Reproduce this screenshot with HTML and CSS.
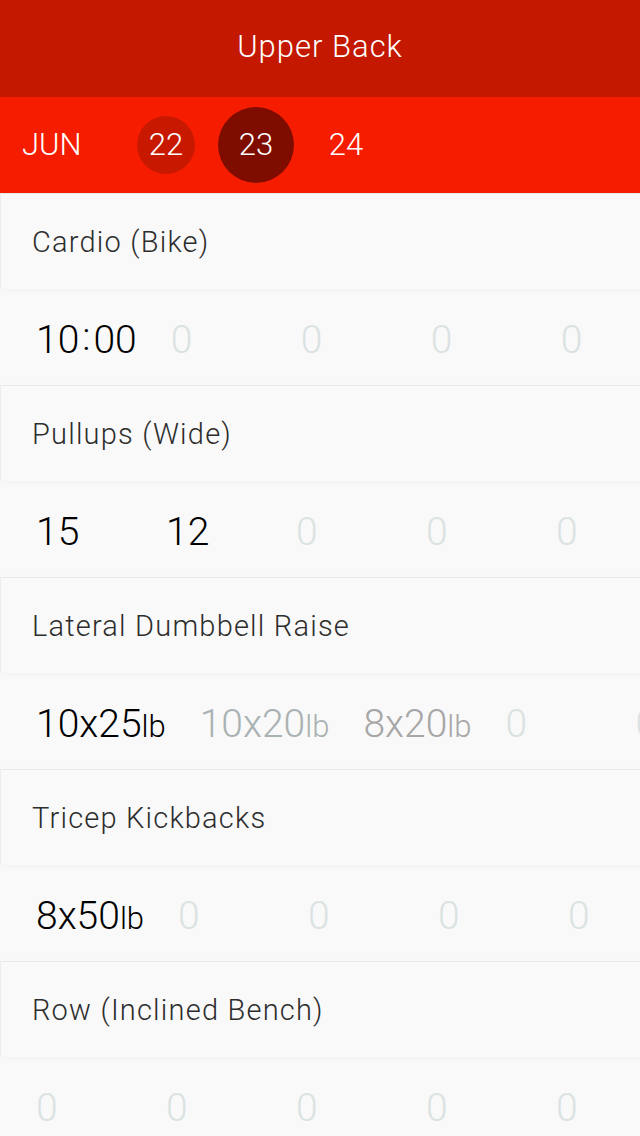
FILE: index.html
```html
<!DOCTYPE html>
<html>
<head>
<meta charset="utf-8">
<link rel="stylesheet" href="styles.css">
</head>
<body>
<div class="app">
  <header class="topbar"><h1 class="title">Upper Back</h1></header>
  <nav class="datebar">
    <span class="month">JUN</span>
    <span class="day day-past">22</span>
    <span class="day day-current">23</span>
    <span class="day">24</span>
  </nav>
  <main class="list">
    <div class="exercise">Cardio (Bike)</div>
    <div class="sets">
      <span class="set done">10<span class="colon">:</span>00</span>
      <span class="set empty">0</span>
      <span class="set empty">0</span>
      <span class="set empty">0</span>
      <span class="set empty">0</span>
    </div>
    <div class="exercise">Pullups (Wide)</div>
    <div class="sets">
      <span class="set done">15</span>
      <span class="set done">12</span>
      <span class="set empty">0</span>
      <span class="set empty">0</span>
      <span class="set empty">0</span>
    </div>
    <div class="exercise">Lateral Dumbbell Raise</div>
    <div class="sets">
      <span class="set done">10x25<span class="unit">lb</span></span>
      <span class="set prev1">10x20<span class="unit">lb</span></span>
      <span class="set prev2">8x20<span class="unit">lb</span></span>
      <span class="set empty">0</span>
      <span class="set empty">0</span>
    </div>
    <div class="exercise">Tricep Kickbacks</div>
    <div class="sets">
      <span class="set done">8x50<span class="unit">lb</span></span>
      <span class="set empty">0</span>
      <span class="set empty">0</span>
      <span class="set empty">0</span>
      <span class="set empty">0</span>
    </div>
    <div class="exercise">Row (Inclined Bench)</div>
    <div class="sets">
      <span class="set empty">0</span>
      <span class="set empty">0</span>
      <span class="set empty">0</span>
      <span class="set empty">0</span>
      <span class="set empty">0</span>
    </div>
  </main>
</div>
</body>
</html>
```
FILE: styles.css
```css
html, body {
  margin: 0;
  padding: 0;
}
body {
  width: 640px;
  height: 1136px;
  overflow: hidden;
  background: #f9f9f9;
  font-family: Roboto, "Liberation Sans", sans-serif;
  font-weight: 300;
}
.app {
  display: flex;
  flex-direction: column;
}
.topbar {
  height: 97px;
  background: #c41800;
  display: flex;
  align-items: center;
  justify-content: center;
}
.title {
  margin: 0;
  color: #fff;
  font-size: 31px;
  font-weight: 300;
  letter-spacing: 1px;
  padding-bottom: 4px;
}
.datebar {
  height: 96px;
  box-sizing: border-box;
  padding-bottom: 2px;
  background: #f51c00;
  display: flex;
  align-items: center;
  color: #fff;
  font-size: 31px;
  padding-left: 22px;
}
.month {
  width: 99px;
}
.day {
  width: 90px;
  height: 76px;
  display: flex;
  align-items: center;
  justify-content: center;
  position: relative;
  z-index: 0;
}
.day::before {
  content: "";
  position: absolute;
  border-radius: 50%;
  z-index: -1;
  margin-top: 2px;
}
.day-past::before {
  width: 58px;
  height: 58px;
  background: #c81900;
}
.day-current::before {
  width: 76px;
  height: 76px;
  background: #7e0d00;
}
.list {
  display: flex;
  flex-direction: column;
}
.exercise {
  height: 95px;
  box-sizing: content-box;
  border-top: 1px solid #e9e9e9;
  border-left: 1px solid #ececec;
  background: #f9f9f9;
  display: flex;
  align-items: center;
  padding-left: 31px;
  font-size: 29px;
  letter-spacing: 1.2px;
  color: #2d2d2d;
  box-shadow: 0 2px 6px rgba(0, 0, 0, 0.035);
  position: relative;
  z-index: 1;
}
.sets {
  height: 96px;
  box-sizing: border-box;
  padding-top: 6px;
  display: flex;
  align-items: center;
  gap: 34px;
  padding-left: 36px;
  white-space: nowrap;
  overflow: hidden;
  font-size: 39px;
}
.set {
  min-width: 96px;
  flex: none;
}
.done {
  color: #000;
}
.empty {
  color: #dbe2e2;
}
.prev1 {
  color: #a9b2b2;
}
.prev2 {
  color: #a6a6a6;
}
.unit {
  font-size: 31px;
}
.colon {
  padding: 0 3px;
  position: relative;
  top: -3px;
}
```
